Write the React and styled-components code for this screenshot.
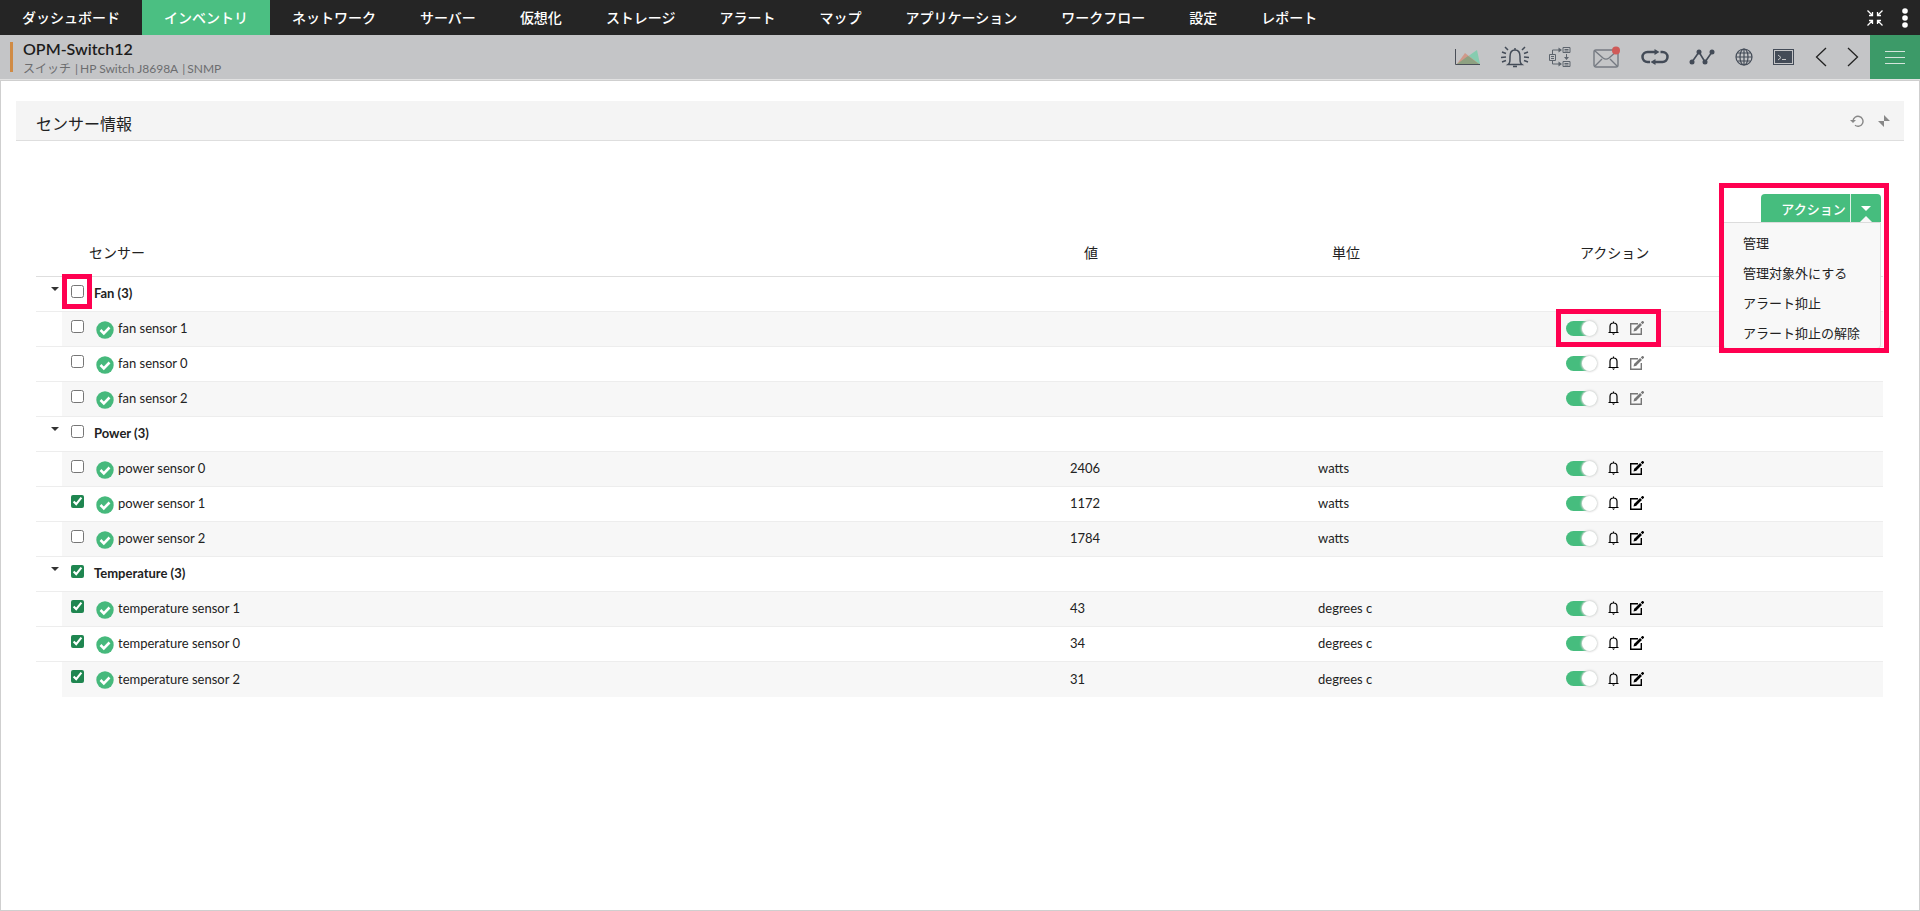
import { useState } from "react";
import styled, { createGlobalStyle } from "styled-components";

const GlobalStyle = createGlobalStyle`
  * {
    box-sizing: border-box;
  }

  body {
    margin: 0;
    background: #fff;
    color: #222;
    font-family: Lato, "Noto Sans CJK JP", sans-serif;
    font-size: 13px;
  }

  button {
    font: inherit;
    color: inherit;
    background: none;
    border: none;
    padding: 0;
    cursor: pointer;
  }
`;

const Page = styled.div`
  display: flex;
  flex-direction: column;
  min-height: 100vh;
`;

const TopNav = styled.nav`
  display: flex;
  align-items: center;
  justify-content: space-between;
  height: 35px;
  background: #252525;
`;

const NavList = styled.div`
  display: flex;
  height: 100%;
`;

const NavLink = styled.a`
  display: flex;
  align-items: center;
  padding: 1px 22px 0;
  font-size: 14px;
  font-weight: 500;
  line-height: 20px;
  white-space: nowrap;
  color: #fff;
  text-decoration: none;
  background: ${({ $active }) => ($active ? "#4bbf82" : "transparent")};
`;

const NavTools = styled.div`
  display: flex;
  align-items: center;
  gap: 16px;
  padding-right: 9px;
`;

const IconButton = styled.button`
  display: flex;
  align-items: center;
  justify-content: center;
  color: ${({ $color }) => $color || "#000"};
`;

const DeviceBar = styled.header`
  display: flex;
  justify-content: space-between;
  height: 45px;
  background: #c4c5c7;
  border-bottom: 1px solid #e2e2e2;
`;

const DeviceInfo = styled.div`
  margin: 7px 0 7px 10px;
  padding-left: 10px;
  border-left: 3px solid #d08b45;
`;

const DeviceName = styled.h1`
  margin: -4px 0 0;
  font-size: 16px;
  font-weight: 600;
  line-height: 21px;
  color: #1c1c1c;
`;

const DeviceMeta = styled.p`
  display: flex;
  gap: 4px;
  margin: 0;
  font-size: 12px;
  line-height: 20px;
  color: #6c6d6f;

  span + span::before {
    content: "|";
    margin-right: 2px;
  }
`;

const DeviceTools = styled.div`
  display: flex;
  align-items: center;
`;

const ToolRow = styled.div`
  display: flex;
  align-items: center;
  gap: 20px;
  padding-right: 11px;
`;

const MenuButton = styled(IconButton)`
  width: 50px;
  height: 44px;
  color: #d5e5dc;
  background: #3c9a68;
`;

const Content = styled.main`
  flex: 1;
  padding: 20px 15px;
  border: 1px solid #cfcfcf;
`;

const PanelHeader = styled.div`
  display: flex;
  align-items: center;
  justify-content: space-between;
  height: 40px;
  padding: 0 13px 0 20px;
  background: #f4f4f4;
  border-bottom: 1px solid #dedede;
`;

const PanelTitle = styled.h2`
  margin: 6px 0 0;
  font-size: 16px;
  font-weight: 400;
  line-height: 24px;
`;

const PanelTools = styled.div`
  display: flex;
  align-items: center;
  gap: 13px;
`;

const PanelBody = styled.section`
  padding: 53px 21px 0 20px;
`;

const Toolbar = styled.div`
  display: flex;
  justify-content: flex-end;
  padding-right: 2px;
`;

const ActionMenu = styled.div`
  position: relative;
`;

const SplitButton = styled.div`
  display: flex;
  height: 28px;
  color: #fff;
  background: #46bd7e;
  border-radius: 4px 4px 0 0;
`;

const ActionButton = styled.button`
  width: 90px;
  padding: 0 4px 0 20px;
  font-weight: 500;
  white-space: nowrap;
  border-right: 1px solid #dff3e8;
`;

const ActionToggle = styled.button`
  position: relative;
  width: 30px;
  display: flex;
  align-items: center;
  justify-content: center;

  &::after {
    content: "";
    position: absolute;
    bottom: 0;
    left: 9px;
    border: 6px solid transparent;
    border-top: 0;
    border-bottom-color: #f8f8f8;
  }
`;

const Caret = styled.span`
  display: block;
  width: 0;
  border: ${({ $size }) => $size}px solid transparent;
  border-top-color: currentColor;
  border-bottom: 0;
`;

const MenuList = styled.ul`
  position: absolute;
  z-index: 1;
  top: 28px;
  right: 0;
  width: 158px;
  margin: 0;
  padding: 4px 0 1px;
  list-style: none;
  background: #f8f8f8;
  border: 1px solid #dcdcdc;
  border-radius: 0 0 4px 4px;
`;

const MenuItem = styled.button`
  display: block;
  width: 100%;
  height: 30px;
  padding-left: 19px;
  text-align: left;
  white-space: nowrap;
`;

const Highlight = styled.span`
  position: absolute;
  z-index: 2;
  inset: ${({ $inset }) => $inset};
  border: 5px solid #ff0050;
  pointer-events: none;
`;

const Table = styled.table`
  width: 100%;
  margin-top: 5px;
  table-layout: fixed;
  border-spacing: 0;
`;

const Col = styled.col`
  width: ${({ $width }) => $width};
`;

const HeadCell = styled.th`
  height: 50px;
  padding: 0 0 0 ${({ $indent }) => $indent}px;
  font-size: 14px;
  font-weight: 400;
  text-align: left;
  border-bottom: 1px solid #dedede;
`;

const Cell = styled.td`
  position: relative;
  height: 35px;
  padding: 0 0 2px;
  line-height: 16px;
  border-bottom: 1px solid #ededed;

  tbody:last-child tr:last-child > & {
    border-bottom: none;
  }
`;

const Row = styled.tr`
  ${Cell}:not(:first-child) {
    background: ${({ $striped }) => ($striped ? "#f7f7f7" : "transparent")};
  }
`;

const CheckCell = styled(Cell)`
  padding: 8px 0 0 9px;
  vertical-align: top;
`;

const TreeCell = styled(Cell)`
  padding: 10px 0 0 15px;
  vertical-align: top;
`;

const CheckBox = styled.input`
  display: block;
  width: 13px;
  height: 13px;
  margin: 0;
  accent-color: #1f8650;
`;

const GroupLabel = styled.label`
  display: block;
  font-weight: 700;
`;

const SensorLabel = styled.label`
  display: flex;
  align-items: center;
  gap: 4px;
  padding-left: 2px;

  svg {
    margin-top: 3px;
  }
`;

const Actions = styled.div`
  display: flex;
  align-items: center;
  width: 78px;
`;

const Switch = styled.input`
  position: relative;
  appearance: none;
  width: 31px;
  height: 15px;
  margin: 0 11px 0 0;
  border-radius: 8px;
  background: ${({ checked }) => (checked ? "#46bd7e" : "#ccc")};
  cursor: pointer;

  &::before {
    content: "";
    position: absolute;
    top: 0;
    left: ${({ checked }) => (checked ? "16px" : "0")};
    width: 15px;
    height: 15px;
    border-radius: 50%;
    background: #fff;
    box-shadow: 0 0 2px 1px #d8d8d8;
  }
`;

const RowButton = styled(IconButton)`
  margin-right: 11px;
`;

const ShrinkIcon = () => (
  <svg width="16" height="16" viewBox="0 0 16 16" fill="none" stroke="currentColor" strokeWidth="1.3">
    <path d="M.5.5l5 5M5.5 2v3.500H2M15.500.5l-5 5M10.500 2v3.500H14M.5 15.500l5-5M5.500 14v-3.500H2M15.500 15.500l-5-5M10.500 14v-3.500H14" />
  </svg>
);

const DotsIcon = () => (
  <svg width="12" height="20" viewBox="0 0 12 20" fill="currentColor">
    <circle cx="6" cy="3" r="2.800" />
    <circle cx="6" cy="10" r="2.800" />
    <circle cx="6" cy="17" r="2.800" />
  </svg>
);

const ChartIcon = () => (
  <svg width="26" height="18" viewBox="0 0 26 18">
    <path d="M2 16L22 2l3 14z" fill="#86ccb0" />
    <path d="M2 16L10 5l14 11z" fill="#d0998a" />
    <path d="M2 16L13 8l11 8z" fill="#8ea181" />
    <path d="M.5 1v15.500H25" fill="none" stroke="#4a4f58" />
  </svg>
);

const AlarmIcon = () => (
  <svg width="28" height="22" viewBox="0 0 28 22" fill="none" stroke="#434b57" strokeWidth="1.500">
    <path d="M7 18.500c2-1.500 2-3 2-8 0-3.500 1.500-6.500 5-6.500s5 3 5 6.500c0 5 0 6.500 2 8zM14 2v2M12 20.500h4" />
    <path d="M1 6l4 1.500M0 11.500l5-.5M1 16l4-1.500M4 1l3 3M27 6l-4 1.500M28 11.500l-5-.5M27 16l-4-1.500M24 1l-3 3" />
  </svg>
);

const FlowIcon = () => (
  <svg width="22" height="22" viewBox="0 0 22 22" fill="none" stroke="#5d646d">
    <path d="M.5 8.500h6v6h-6zM14 1.500h7v5h-7zM14 15.500h7v5h-7zM2 10.500h3M2 12.500h3M15.500 3.500h4M15.500 5h4M15.500 17.500h4M15.500 19h4" />
    <path d="M3.500 8V4h7M3.500 15v3h7M17.500 8v5" />
    <path d="M9.500 1.500l3.500 2.500-3.500 2.500zM9.500 15.500l3.500 2.500-3.500 2.500zM15 11h5l-2.500 3z" fill="#5d646d" stroke="none" />
  </svg>
);

const MailIcon = () => (
  <svg width="30" height="22" viewBox="-2 0 30 22" fill="none" stroke="#757a82" strokeWidth="1.400">
    <rect x="1" y="4" width="24" height="17" rx="2" />
    <path d="M2 5l8 7c2 1.500 4 1.500 6 0l8-7M2 20l7-7M24 20l-7-7" />
    <circle cx="23" cy="4.500" r="4" fill="#cf5a58" stroke="none" />
  </svg>
);

const LoopIcon = () => (
  <svg width="28" height="16" viewBox="0 0 28 16" fill="none" stroke="#434b57" strokeWidth="2.500">
    <path d="M9 13H6.500a5 5 0 010-10H14M19.500 3h2a5 5 0 010 10H14" />
    <path d="M13.500 0l5 3-5 3zM14.500 10l-5 3 5 3z" fill="#434b57" stroke="none" />
  </svg>
);

const TrendIcon = () => (
  <svg width="26" height="16" viewBox="0 0 26 16" fill="#434b57">
    <path d="M3 13l7-10 6 10 7-10" fill="none" stroke="#434b57" strokeWidth="1.600" />
    <circle cx="3" cy="13" r="2.500" />
    <circle cx="10" cy="3" r="2.500" />
    <circle cx="16" cy="13" r="2.500" />
    <circle cx="23" cy="3" r="2.500" />
  </svg>
);

const GlobeIcon = () => (
  <svg width="18" height="18" viewBox="0 0 18 18" fill="none" stroke="#434b57" strokeWidth="1.200">
    <circle cx="9" cy="9" r="8" />
    <ellipse cx="9" cy="9" rx="4" ry="8" />
    <path d="M1 9h16M9 1v16M2.500 5h13M2.500 13h13" />
  </svg>
);

const TerminalIcon = () => (
  <svg width="22" height="16" viewBox="0 0 22 16">
    <rect x=".5" y=".5" width="20" height="15" fill="#c4c5c7" stroke="#434b57" />
    <rect x="2" y="2" width="17" height="12" fill="#434b57" />
    <path d="M5 6l3 2.500L5 11M9 10.500h4" fill="none" stroke="#c4c5c7" />
  </svg>
);

const ChevronIcon = ({ right }) => (
  <svg width="12" height="20" viewBox="0 0 12 20" fill="none" stroke="#222" strokeWidth="1.300">
    <path d={right ? "M1 1l9.500 9L1 19" : "M11 1l-9.500 9L11 19"} />
  </svg>
);

const BurgerIcon = () => (
  <svg width="20" height="14" viewBox="0 0 20 14" stroke="currentColor">
    <path d="M0 1.500h20M0 7.500h20M0 13.500h20" />
  </svg>
);

const ReloadIcon = () => (
  <svg width="14" height="14" viewBox="0 0 14 14" fill="none" stroke="#888" strokeWidth="1.400">
    <path d="M3 7a5 5 0 112 4.300" />
    <path d="M0 6h6L3 9z" fill="#888" stroke="none" />
  </svg>
);

const PinIcon = () => (
  <svg width="14" height="14" viewBox="0 0 14 14" fill="#888">
    <path d="M7 1v6h6zM7 13V7H1z" />
  </svg>
);

const StatusIcon = () => (
  <svg width="18" height="18" viewBox="0 0 18 18">
    <circle cx="9" cy="9" r="8.700" fill="#46b97c" />
    <path d="M4.500 9l3.300 3.300L13.500 6.500" fill="none" stroke="#fff" strokeWidth="2.600" />
  </svg>
);

const BellIcon = () => (
  <svg width="11" height="14" viewBox="0 0 11 14" fill="none" stroke="currentColor" strokeWidth="1.200">
    <path d="M2 11V5.500C2 3.500 3.500 2 5.500 2S9 3.500 9 5.500V11M.500 11.500h10M5.500.500V2" />
    <path d="M4 12.500h3L5.500 14z" fill="currentColor" stroke="none" />
  </svg>
);

const EditIcon = () => (
  <svg width="14" height="14" viewBox="0 0 14 14" fill="none" stroke="currentColor">
    <path d="M8 2.700H.700V13.300H11.300V7" strokeWidth="1.400" />
    <path d="M5 9l6-6" strokeWidth="2.600" />
    <path d="M11.700 2.300L13.500.500" strokeWidth="2.600" />
    <path d="M3.500 10.500l.7-3 2.300 2.300z" fill="currentColor" stroke="none" />
  </svg>
);

const navItems = [
  "ダッシュボード",
  "インベントリ",
  "ネットワーク",
  "サーバー",
  "仮想化",
  "ストレージ",
  "アラート",
  "マップ",
  "アプリケーション",
  "ワークフロー",
  "設定",
  "レポート",
];

const menuItems = ["管理", "管理対象外にする", "アラート抑止", "アラート抑止の解除"];

const deviceTools = [
  ["グラフ", ChartIcon],
  ["アラーム", AlarmIcon],
  ["ワークフロー", FlowIcon],
  ["メール", MailIcon],
  ["接続", LoopIcon],
  ["トレンド", TrendIcon],
  ["ブラウザー", GlobeIcon],
  ["ターミナル", TerminalIcon],
];

const sensorGroups = [
  {
    name: "Fan",
    muted: true,
    sensors: [{ name: "fan sensor 1" }, { name: "fan sensor 0" }, { name: "fan sensor 2" }],
  },
  {
    name: "Power",
    unit: "watts",
    sensors: [
      { name: "power sensor 0", value: 2406 },
      { name: "power sensor 1", value: 1172, selected: true },
      { name: "power sensor 2", value: 1784 },
    ],
  },
  {
    name: "Temperature",
    unit: "degrees c",
    selected: true,
    sensors: [
      { name: "temperature sensor 1", value: 43, selected: true },
      { name: "temperature sensor 0", value: 34, selected: true },
      { name: "temperature sensor 2", value: 31, selected: true },
    ],
  },
];

const SensorRow = ({ sensor, group, striped, highlighted }) => {
  const [enabled, setEnabled] = useState(true);
  const id = sensor.name.replaceAll(" ", "-");

  return (
    <Row $striped={striped}>
      <Cell />
      <CheckCell>
        <CheckBox type="checkbox" id={id} defaultChecked={sensor.selected} />
      </CheckCell>
      <Cell>
        <SensorLabel htmlFor={id}>
          <StatusIcon />
          {sensor.name}
        </SensorLabel>
      </Cell>
      <Cell>{sensor.value}</Cell>
      <Cell>{group.unit}</Cell>
      <Cell>
        <Actions>
          <Switch
            type="checkbox"
            role="switch"
            aria-label={sensor.name}
            checked={enabled}
            onChange={() => setEnabled(!enabled)}
          />
          <RowButton aria-label="アラート抑止">
            <BellIcon />
          </RowButton>
          <IconButton aria-label="編集" $color={group.muted ? "#777" : "#000"}>
            <EditIcon />
          </IconButton>
        </Actions>
        {highlighted && <Highlight $inset="-3px 222px -1px -10px" />}
      </Cell>
    </Row>
  );
};

const SensorGroup = ({ group, highlighted }) => (
  <tbody>
    <Row>
      <TreeCell>
        <IconButton aria-label={group.name} $color="#333">
          <Caret $size={4} />
        </IconButton>
      </TreeCell>
      <CheckCell>
        <CheckBox type="checkbox" id={group.name} defaultChecked={group.selected} />
        {highlighted && <Highlight $inset="-3px 2px 2px 0" />}
      </CheckCell>
      <Cell colSpan={4}>
        <GroupLabel htmlFor={group.name}>
          {group.name} ({group.sensors.length})
        </GroupLabel>
      </Cell>
    </Row>
    {group.sensors.map((sensor, index) => (
      <SensorRow
        key={sensor.name}
        sensor={sensor}
        group={group}
        striped={index % 2 === 0}
        highlighted={highlighted && index === 0}
      />
    ))}
  </tbody>
);

const App = () => {
  return (
    <Page>
      <GlobalStyle />
      <TopNav>
        <NavList>
          {navItems.map((item, index) => (
            <NavLink key={item} href="#" $active={index === 1}>
              {item}
            </NavLink>
          ))}
        </NavList>
        <NavTools>
          <IconButton aria-label="縮小" $color="#fff">
            <ShrinkIcon />
          </IconButton>
          <IconButton aria-label="その他" $color="#fff">
            <DotsIcon />
          </IconButton>
        </NavTools>
      </TopNav>

      <DeviceBar>
        <DeviceInfo>
          <DeviceName>OPM-Switch12</DeviceName>
          <DeviceMeta>
            <span>スイッチ</span>
            <span>HP Switch J8698A</span>
            <span>SNMP</span>
          </DeviceMeta>
        </DeviceInfo>
        <DeviceTools>
          <ToolRow>
            {deviceTools.map(([label, Icon]) => (
              <IconButton key={label} aria-label={label}>
                <Icon />
              </IconButton>
            ))}
            <IconButton aria-label="前へ">
              <ChevronIcon />
            </IconButton>
            <IconButton aria-label="次へ">
              <ChevronIcon right />
            </IconButton>
          </ToolRow>
          <MenuButton aria-label="メニュー">
            <BurgerIcon />
          </MenuButton>
        </DeviceTools>
      </DeviceBar>

      <Content>
        <PanelHeader>
          <PanelTitle>センサー情報</PanelTitle>
          <PanelTools>
            <IconButton aria-label="更新">
              <ReloadIcon />
            </IconButton>
            <IconButton aria-label="固定">
              <PinIcon />
            </IconButton>
          </PanelTools>
        </PanelHeader>
        <PanelBody>
          <Toolbar>
            <ActionMenu>
              <SplitButton>
                <ActionButton>アクション</ActionButton>
                <ActionToggle aria-label="アクションメニュー">
                  <Caret $size={5} />
                </ActionToggle>
              </SplitButton>
              <MenuList>
                {menuItems.map((item) => (
                  <li key={item}>
                    <MenuItem>{item}</MenuItem>
                  </li>
                ))}
              </MenuList>
              <Highlight $inset="-11px -8px -131px -42px" />
            </ActionMenu>
          </Toolbar>
          <Table>
            <colgroup>
              <Col $width="26px" />
              <Col $width="32px" />
              <Col />
              <Col $width="248px" />
              <Col $width="248px" />
              <Col $width="317px" />
            </colgroup>
            <thead>
              <tr>
                <HeadCell />
                <HeadCell colSpan={2} $indent={27}>センサー</HeadCell>
                <HeadCell $indent={14}>値</HeadCell>
                <HeadCell $indent={14}>単位</HeadCell>
                <HeadCell $indent={14}>アクション</HeadCell>
              </tr>
            </thead>
            {sensorGroups.map((group, index) => (
              <SensorGroup key={group.name} group={group} highlighted={index === 0} />
            ))}
          </Table>
        </PanelBody>
      </Content>
    </Page>
  );
};

export default App;
